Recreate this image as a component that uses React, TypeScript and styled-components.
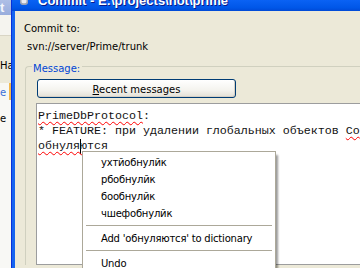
import React from "react";
import styled, { createGlobalStyle } from "styled-components";

const GlobalStyle = createGlobalStyle`
  html, body {
    margin: 0;
    padding: 0;
    background: #ece9d8;
  }
`;

const Screen = styled.div`
  display: flex;
  width: 360px;
  height: 268px;
  overflow: hidden;
  font-family: "DejaVu Sans", Tahoma, sans-serif;
  font-size: 10px;
  color: #000;
`;

/* window lying behind, only its right edge shows */
const BackWindow = styled.div`
  width: 11px;
  flex: none;
  display: flex;
  flex-direction: column;
  overflow: hidden;
  background: #ece9d8;
`;

const BackTitle = styled.div`
  height: 15px;
  flex: none;
  background: linear-gradient(to bottom, #aebfe6, #98acdc);
  color: #f4f6fc;
  font: bold 13px/15px "Liberation Sans", Arial, sans-serif;
`;

const BackToolbar = styled.div`
  height: 21px;
  flex: none;
  background: #f5f4ef;
  border-bottom: 1px solid #d9d5c5;
  box-sizing: border-box;
`;

const BackLabel = styled.div`
  margin-top: 23px;
  line-height: 13px;
  white-space: nowrap;
`;

const BackTab = styled.div`
  margin-top: 11px;
  height: 17px;
  box-sizing: border-box;
  background: #f7f7f3;
  border-right: 2px solid #f2b84c;
  color: #3a6fd8;
  line-height: 20px;
  overflow: hidden;
`;

const BackList = styled.div`
  flex: 1;
  background: #f8f8f5;
  padding-top: 12px;
  line-height: 13px;
`;

/* the commit dialog */
const Window = styled.div`
  flex: none;
  width: 600px;
  display: flex;
  flex-direction: column;
  border-left: 1px solid #0831d9;
`;

const TitleBar = styled.div`
  height: 11px;
  flex: none;
  display: flex;
  align-items: flex-start;
  gap: 10px;
  padding-left: 8px;
  overflow: hidden;
  background: linear-gradient(to bottom, #0a62f4, #0057e8 70%, #0049d6);
`;

const TitleText = styled.div`
  margin-top: -6px;
  color: #fff;
  font: bold 13px/13px "Liberation Sans", Arial, sans-serif;
  text-shadow: 1px 1px #0a1a8a;
  white-space: nowrap;
`;

const Body = styled.div`
  flex: 1;
  display: flex;
  flex-direction: column;
  align-items: flex-start;
  border-left: 3px solid #1664f0;
  background: #ece9d8;
  padding: 11px 0 0 9px;
`;

const Line = styled.div<{ $indent?: number; $gap?: number }>`
  line-height: 13px;
  white-space: nowrap;
  margin-top: ${(p) => p.$gap ?? 0}px;
  padding-left: ${(p) => p.$indent ?? 0}px;
`;

const GroupBox = styled.div`
  align-self: stretch;
  margin: 13px 0 0 1px;
  padding-left: 11px;
  border: 1px solid #d0d0bf;
  border-right: none;
  border-bottom: none;
  border-top-left-radius: 4px;
`;

const Legend = styled.div`
  width: fit-content;
  margin: -5px 0 0 -5px;
  padding: 0 2px 0 1px;
  background: #ece9d8;
  color: #0046d5;
  line-height: 13px;
`;

const Button = styled.div`
  margin-top: 4px;
  width: 199px;
  height: 19px;
  box-sizing: border-box;
  display: flex;
  align-items: center;
  justify-content: center;
  padding-top: 1px;
  border: 1px solid #003c74;
  border-radius: 3px;
  background: linear-gradient(to bottom, #ffffff, #f4f3ee 60%, #e3e0d6);
  box-shadow: inset -1px -1px 0 #d6d0c5;
  line-height: 13px;

  u {
    text-decoration: underline;
    text-underline-offset: 1px;
  }
`;

const Editor = styled.div`
  position: relative;
  margin: 5px 0 0 -1px;
  width: 500px;
  height: 162px;
  box-sizing: border-box;
  border: 1px solid #9c9d9e;
  background: #fff;
  padding: 5px 0 0 1px;
  font-family: "Liberation Mono", "Courier New", monospace;
  font-size: 11.67px;
  line-height: 15px;
  white-space: pre;
  color: #111;
`;

const Misspelled = styled.span`
  text-decoration: underline wavy #ff0000;
  text-decoration-thickness: 1px;
  text-underline-offset: 2px;
  text-decoration-skip-ink: none;
`;

const Caret = styled.span`
  display: inline-block;
  width: 1px;
  height: 15px;
  margin-right: -1px;
  vertical-align: top;
  background: #000;
`;

const Menu = styled.div`
  position: absolute;
  left: 45px;
  top: 47px;
  width: 194px;
  box-sizing: border-box;
  padding: 2px 1px 6px;
  background: #fff;
  border: 1px solid #aca899;
  box-shadow: 3px 3px 2px -1px rgba(0, 0, 0, 0.4);
  font-family: "DejaVu Sans", Tahoma, sans-serif;
  font-size: 10px;
  letter-spacing: -0.2px;
  white-space: nowrap;
  color: #000;
`;

const MenuItem = styled.div`
  height: 17px;
  line-height: 17px;
  padding-left: 17px;
`;

const Separator = styled.div`
  height: 1px;
  margin: 3px 2px 4px;
  background: #aca899;
`;

const suggestions = ["ухтйобнулйк", "рбобнулйк", "бообнулйк", "чшефобнулйк"];

export default function App() {
  return (
    <>
      <GlobalStyle />
      <Screen>
        <BackWindow>
          <BackTitle>t</BackTitle>
          <BackToolbar />
          <BackLabel>Ha</BackLabel>
          <BackTab>e</BackTab>
          <BackList>e</BackList>
        </BackWindow>

        <Window>
          <TitleBar>
            <svg width="8" height="5" viewBox="0 0 8 5">
              <path d="M0 0h8v2.5c0 1.4-1.2 2.5-2.6 2.5H2.6C1.2 5 0 3.9 0 2.5z" fill="#9aa3b5" />
              <path d="M1.5 0h5v1.8c0 .8-.6 1.4-1.4 1.4H2.9c-.8 0-1.4-.6-1.4-1.4z" fill="#e9ecf2" />
            </svg>
            <TitleText>Commit - E:\projects\not\prime</TitleText>
          </TitleBar>

          <Body>
            <Line>Commit to:</Line>
            <Line $gap={5} $indent={3}>
              svn://server/Prime/trunk
            </Line>

            <GroupBox>
              <Legend>Message:</Legend>
              <Button>
                <span>
                  <u>R</u>ecent messages
                </span>
              </Button>
              <Editor>
                <div>
                  <Misspelled>PrimeDbProtocol</Misspelled>:
                </div>
                <div>
                  * FEATURE: при удалении глобальных объектов <Misspelled>Со</Misspelled>
                </div>
                <div>
                  <Misspelled>
                    обнуля<Caret />ются
                  </Misspelled>
                </div>

                <Menu>
                  {suggestions.map((s) => (
                    <MenuItem key={s}>{s}</MenuItem>
                  ))}
                  <Separator />
                  <MenuItem>Add 'обнуляются' to dictionary</MenuItem>
                  <Separator />
                  <MenuItem>Undo</MenuItem>
                </Menu>
              </Editor>
            </GroupBox>
          </Body>
        </Window>
      </Screen>
    </>
  );
}
